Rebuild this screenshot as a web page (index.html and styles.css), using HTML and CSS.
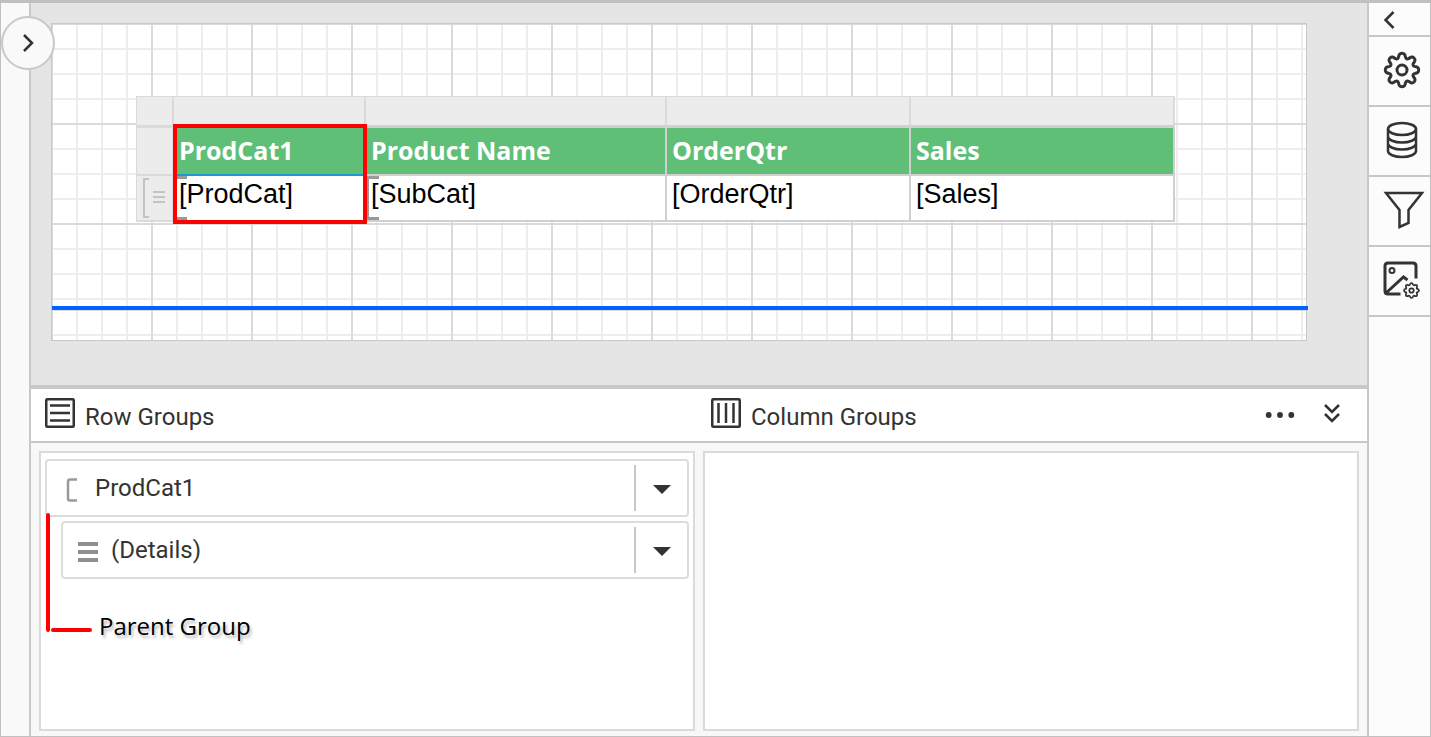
FILE: index.html
```html
<!DOCTYPE html>
<html lang="en">
<head>
<meta charset="utf-8">
<title>Report Designer</title>
<link rel="stylesheet" href="styles.css">
</head>
<body>
<div class="app">
  <aside class="left-rail">
    <button class="expand" type="button" aria-label="Expand panel">
      <svg width="14" height="20" viewBox="0 0 14 20"><path d="M3 2l8 8-8 8" class="stroke"/></svg>
    </button>
  </aside>

  <main class="center">
    <section class="surface">
      <div class="page">
        <div class="page-body grid-lines">
          <div class="tablix">
            <table>
              <colgroup><col class="c-handle"><col class="c-cat"><col class="c-name"><col class="c-qtr"><col class="c-sales"></colgroup>
              <tbody>
                <tr class="handles"><td></td><td></td><td></td><td></td><td></td></tr>
                <tr class="heading"><td class="handle"></td><th>ProdCat1</th><th>Product Name</th><th>OrderQtr</th><th>Sales</th></tr>
                <tr class="detail">
                  <td class="handle">
                    <svg width="36" height="44" viewBox="0 0 36 44"><path d="M12 3H7v38h5" fill="none" stroke="#c3c3c3" stroke-width="2"/><path d="M16 16h12M16 21h12M16 26h12" stroke="#c3c3c3" stroke-width="2"/></svg>
                  </td>
                  <td class="bracketed">[ProdCat]</td><td class="bracketed">[SubCat]</td><td>[OrderQtr]</td><td>[Sales]</td>
                </tr>
              </tbody>
            </table>
            <div class="highlight"></div>
          </div>
        </div>
        <div class="page-split"></div>
        <div class="page-footer grid-lines"></div>
      </div>
    </section>

    <section class="groups">
      <header class="groups-head">
        <div class="head-cell">
          <svg class="head-icon" width="30" height="30" viewBox="0 0 30 30"><rect x="1.250" y="1.250" width="27.500" height="27.500" rx="1" class="stroke"/><path d="M5 7.500h20M5 15h20M5 22.500h20" class="stroke"/></svg>
          <h2>Row Groups</h2>
        </div>
        <div class="head-cell">
          <svg class="head-icon" width="30" height="30" viewBox="0 0 30 30"><rect x="1.250" y="1.250" width="27.500" height="27.500" rx="1" class="stroke"/><path d="M7.500 5v20M15 5v20M22.500 5v20" class="stroke"/></svg>
          <h2>Column Groups</h2>
          <div class="head-actions">
            <button type="button" aria-label="More options"><svg width="30" height="18" viewBox="0 0 30 18"><g fill="#333"><circle cx="3.700" cy="9" r="2.900"/><circle cx="15" cy="9" r="2.900"/><circle cx="26.300" cy="9" r="2.900"/></g></svg></button>
            <button type="button" aria-label="Collapse"><svg width="16" height="20" viewBox="0 0 16 20"><path d="M1 0l7 7 7-7M1 9l7 7 7-7" class="stroke"/></svg></button>
          </div>
        </div>
      </header>
      <div class="groups-body">
        <div class="panel">
          <div class="item">
            <span class="item-icon"><svg width="12" height="24" viewBox="0 0 12 24"><path d="M12 1.500H5Q3 1.500 3 3.500v17Q3 22.500 5 22.500h7" fill="none" stroke="#999" stroke-width="2.500"/></svg></span>
            <span class="item-name">ProdCat1</span>
            <button type="button" aria-label="ProdCat1 options"><svg width="18" height="9" viewBox="0 0 18 9"><path d="M0 0h18L9 9z" fill="#333"/></svg></button>
          </div>
          <div class="item nested">
            <span class="item-icon"><svg width="20" height="20" viewBox="0 0 20 20"><path d="M1 2h20M1 10h20M1 18h20" stroke="#8f8f8f" stroke-width="4"/></svg></span>
            <span class="item-name">(Details)</span>
            <button type="button" aria-label="Details options"><svg width="18" height="9" viewBox="0 0 18 9"><path d="M0 0h18L9 9z" fill="#333"/></svg></button>
          </div>
          <div class="note">
            <svg width="48" height="122" viewBox="0 0 48 122"><path d="M2 3v115M7 118h37" fill="none" stroke="#f00" stroke-width="4" stroke-linecap="round"/></svg>
            <span>Parent Group</span>
          </div>
        </div>
        <div class="panel"></div>
      </div>
    </section>
  </main>

  <nav class="tools">
    <button class="tool tool-small" type="button" aria-label="Collapse tools"><svg width="14" height="20" viewBox="0 0 14 20"><path d="M10.500 3l-8 8 8 8" class="stroke"/></svg></button>
    <button class="tool" type="button" aria-label="Properties">
      <svg width="38" height="38" viewBox="-19 -19 38 38"><path class="stroke thick" d="M-3.600-12.500C-3-15.500-2.600-16.700 0-16.700S3-15.500 3.600-12.500Q4.500-10.300 6.500-11.300C9-13.100 10.200-13.800 12-12S13.100-9 11.300-6.500Q10.300-4.500 12.500-3.600C15.500-3 16.700-2.600 16.700 0S15.500 3 12.500 3.600Q10.300 4.500 11.300 6.500C13.100 9 13.800 10.200 12 12S9 13.100 6.500 11.300Q4.500 10.300 3.600 12.500C3 15.500 2.600 16.700 0 16.700S-3 15.500-3.600 12.500Q-4.500 10.300-6.500 11.300C-9 13.100-10.200 13.800-12 12S-13.100 9-11.300 6.500Q-10.300 4.500-12.500 3.600C-15.500 3-16.700 2.600-16.700 0S-15.500-3-12.500-3.600Q-10.300-4.500-11.300-6.500C-13.100-9-13.800-10.200-12-12S-9-13.100-6.500-11.300Q-4.500-10.300-3.600-12.500Z"/><circle r="5" class="stroke thick"/></svg>
    </button>
    <button class="tool" type="button" aria-label="Data">
      <svg width="32" height="38" viewBox="0 0 32 38"><ellipse cx="16" cy="8" rx="14" ry="6" class="stroke"/><path class="stroke" d="M2 8v22c0 3.300 6.300 6 14 6s14-2.700 14-6V8M2 15.500c0 3.300 6.300 6 14 6s14-2.700 14-6M2 22.500c0 3.300 6.300 6 14 6s14-2.700 14-6"/></svg>
    </button>
    <button class="tool" type="button" aria-label="Parameters">
      <svg class="funnel" width="40" height="38" viewBox="0 0 40 38"><path class="stroke" d="M2 2h36L24.500 19V32L15.500 36V19Z"/></svg>
    </button>
    <button class="tool" type="button" aria-label="Image manager">
      <svg width="38" height="38" viewBox="0 0 38 38"><path class="stroke thick" d="M33 17.500V5Q33 2 30 2H5Q2 2 2 5v25Q2 33 5 33h12.500M3 32L20.500 16l4 3"/><circle cx="9" cy="9.500" r="2.500" class="stroke thin"/>
        <g transform="translate(28.500 29.500) scale(.44)"><path fill="#fcfcfc" stroke="#333" stroke-width="4" d="M-3.600-13.500C-3-15.500-2.600-17 0-17S3-15.500 3.600-13.500Q4.500-11 7-12.100C9-13.100 10.200-13.800 12-12S13.100-9 12.100-7Q11-4.500 13.500-3.600C15.500-3 17-2.600 17 0S15.500 3 13.500 3.600Q11 4.500 12.100 7C13.100 9 13.800 10.200 12 12S9 13.100 7 12.100Q4.500 11 3.600 13.500C3 15.500 2.600 17 0 17S-3 15.500-3.600 13.500Q-4.500 11-7 12.100C-9 13.100-10.200 13.800-12 12S-13.100 9-12.100 7Q-11 4.500-13.500 3.600C-15.500 3-17 2.600-17 0S-15.500-3-13.500-3.600Q-11-4.500-12.100-7C-13.100-9-13.800-10.200-12-12S-9-13.100-7-12.100Q-4.500-11-3.600-13.500Z"/><circle r="5" fill="none" stroke="#333" stroke-width="4"/></g></svg>
    </button>
  </nav>
</div>
</body>
</html>
```

FILE: styles.css
```css
* { box-sizing: border-box; }

body {
  margin: 0;
  color: #333;
  font-family: Roboto, sans-serif;
  font-size: 24px;
}

button {
  display: flex;
  align-items: center;
  justify-content: center;
  padding: 0;
  border: 0;
  background: none;
  color: inherit;
  font: inherit;
}

svg { display: block; overflow: visible; flex: none; }
.stroke { fill: none; stroke: #333; stroke-width: 2.5px; }
.thick { stroke-width: 3px; }
.thin { stroke-width: 2px; }

.app {
  display: flex;
  min-height: 100vh;
  border: 1px solid #c0c0c0;
  border-top-width: 3px;
}

.left-rail {
  position: relative;
  flex: none;
  width: 30px;
  border-right: 2px solid #c8c8c8;
  background: #f9f9f9;
}

.expand {
  position: absolute;
  z-index: 2;
  top: 13px;
  left: 0;
  width: 54px;
  height: 54px;
  border: 2px solid #c8c8c8;
  border-radius: 50%;
  background: #f9f9f9;
}

.center {
  display: flex;
  flex: 1;
  flex-direction: column;
  min-width: 0;
}

.surface {
  padding: 20px 60px 44px 20px;
  border-bottom: 4px solid #c8c8c8;
  background: #e5e5e5;
}

.page {
  border: 1px solid #c8c8c8;
  background: #fff;
}

.grid-lines {
  background-image:
    linear-gradient(90deg, transparent 98px, #dadada 98px),
    linear-gradient(transparent 98px, #dadada 98px),
    linear-gradient(90deg, transparent 23px, #ededed 23px),
    linear-gradient(transparent 23px, #ededed 23px);
  background-size: 100px 100px, 100px 100px, 25px 25px, 25px 25px;
  background-position: 1px 1px;
}

.page-body { padding: 72px 0 84px 84px; }
.page-split { height: 4px; margin-right: -2px; background: #0062ff; }
.page-footer { height: 30px; }

.tablix { position: relative; width: 1039px; }

table {
  width: 100%;
  table-layout: fixed;
  border-spacing: 0;
}

.c-handle { width: 38px; }
.c-cat { width: 192px; }
.c-name { width: 301px; }
.c-qtr { width: 244px; }
.c-sales { width: 264px; }

td, th {
  padding: 0 0 0 5px;
  border-right: 2px solid #d0d0d0;
  border-bottom: 2px solid #d0d0d0;
  text-align: left;
  white-space: nowrap;
}

.handles td {
  height: 32px;
  border-top: 1px solid #dadada;
  border-right-color: #dadada;
  border-bottom-width: 3px;
  background: #ececec;
}

.handles td:first-child, td.handle {
  padding: 0;
  border-left: 1px solid #dadada;
  border-right-color: #dadada;
  border-bottom-color: #dadada;
  background: #ececec;
}

.heading th {
  height: 48px;
  padding-bottom: 2px;
  background: #5fbf77;
  color: #fff;
  font: bold 25px/34px "Open Sans", "Noto Sans", sans-serif;
}

.detail td {
  height: 46px;
  background: #fff;
  color: #000;
  font: 27px/36px "Liberation Sans", Arial, sans-serif;
  vertical-align: top;
}
.detail td.handle { background: #ececec; }

.heading th:nth-child(2) { border-bottom-color: #1c98d8; }

.detail td.bracketed {
  background-image: linear-gradient(#999, #999), linear-gradient(#999, #999), linear-gradient(#999, #999);
  background-repeat: no-repeat;
  background-size: 13px 3px, 13px 3px, 3px 100%;
  background-position: left top, left bottom, left top;
}

.highlight {
  position: absolute;
  top: 28px;
  left: 37px;
  width: 194px;
  height: 100px;
  border: 4px solid #f00;
}

.groups {
  display: flex;
  flex: 1;
  flex-direction: column;
  background: #f8f8f8;
}

.groups-head {
  display: grid;
  grid-template-columns: 1fr 1fr;
  gap: 8px;
  height: 54px;
  padding: 0 6px;
  border-bottom: 2px solid #c8c8c8;
  background: #fff;
}

.head-cell {
  display: flex;
  align-items: center;
  gap: 10px;
  padding: 0 21px 0 8px;
}

.head-icon { margin-bottom: 4px; }
h2 { margin: 0; padding-top: 4px; font-size: 24px; font-weight: 400; line-height: 28px; }

.head-actions {
  display: flex;
  align-items: center;
  gap: 29px;
  margin-left: auto;
}

.groups-body {
  display: grid;
  flex: 1;
  grid-template-columns: 1fr 1fr;
  gap: 8px;
  padding: 8px 8px 5px;
}

.panel {
  position: relative;
  display: flex;
  flex-direction: column;
  gap: 4px;
  padding: 6px 4px;
  border: 2px solid #dadada;
  background: #fff;
}

.item {
  display: flex;
  align-items: center;
  height: 58px;
  border: 2px solid #dcdcdc;
  border-radius: 4px;
}
.nested { margin-left: 16px; }

.item-icon {
  display: flex;
  justify-content: center;
  width: 48px;
  padding-top: 4px;
}
.item-name { flex: 1; line-height: 28px; }

.item button {
  width: 53px;
  height: 46px;
  padding-top: 2px;
  border-left: 2px solid #c8c8c8;
}

.note {
  position: absolute;
  top: 59px;
  left: 5px;
  display: flex;
  align-items: flex-end;
  gap: 5px;
  color: #000;
  font: 24px/34px "Open Sans", "Noto Sans", sans-serif;
  text-shadow: 2px 3px 3px #bbb;
}
.note span { margin-bottom: -9px; }

.tools {
  flex: none;
  width: 63px;
  border-left: 2px solid #c8c8c8;
  background: #fcfcfc;
}

.tool {
  width: 100%;
  height: 70px;
  padding: 0 0 2px 5px;
  border-bottom: 2px solid #c8c8c8;
}
.tool-small { height: 34px; padding: 0 20px 0 0; }
.funnel { margin-left: 3px; }
```
